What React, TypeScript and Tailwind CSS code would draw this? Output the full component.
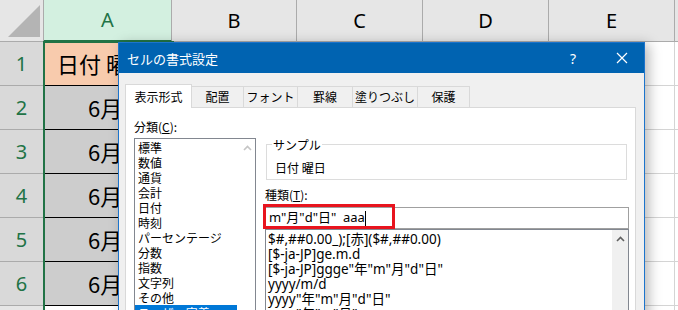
import React from "react";

const catItems = [
  "標準",
  "数値",
  "通貨",
  "会計",
  "日付",
  "時刻",
  "パーセンテージ",
  "分数",
  "指数",
  "文字列",
  "その他",
];

const fmtItems = [
  "$#,##0.00_);[赤]($#,##0.00)",
  "[$-ja-JP]ge.m.d",
  '[$-ja-JP]ggge"年"m"月"d"日"',
  "yyyy/m/d",
  'yyyy"年"m"月"d"日"',
  'yyyy"年"m"月"',
];

function ChevronUp({ color }: { color: string }) {
  return (
    <svg width="9" height="6" viewBox="0 0 9 6">
      <polyline points="1,5 4.5,1.5 8,5" fill="none" stroke={color} strokeWidth="1.6" />
    </svg>
  );
}

function Sheet() {
  const colHeaders = ["B", "C", "D", "E", ""];
  return (
    <div className="grid grid-cols-[44px_128px_125px_126px_126px_126px_126px] grid-rows-[42px_repeat(7,44px)] font-['Noto_Sans',sans-serif]">
      <div className="relative bg-[#E6E6E6] border-r border-b border-[#ABABAB]">
        <svg className="absolute left-0 top-0" width="44" height="42" viewBox="0 0 44 42">
          <polygon points="8,37 40,37 40,5" fill="#B4B4B4" />
        </svg>
      </div>
      <div className="flex items-center justify-center bg-[#D3F0E0] border-r border-[#ABABAB] border-b-2 border-b-[#217346] text-[20px] text-[#217346]">
        A
      </div>
      {colHeaders.map((c, i) => (
        <div
          key={i}
          className="flex items-center justify-center bg-[#E6E6E6] border-r border-b border-[#ABABAB] text-[20px] text-black"
        >
          {c}
        </div>
      ))}
      {[1, 2, 3, 4, 5, 6, 7].map((r) => (
        <React.Fragment key={r}>
          <div
            className={
              r <= 6
                ? "flex items-center justify-center bg-[#D9D9D9] border-r border-b border-[#ABABAB] text-[20px] text-[#217346]"
                : "flex items-center justify-center bg-[#E6E6E6] border-r border-b border-[#ABABAB] text-[20px] text-black"
            }
          >
            {r}
          </div>
          {r === 1 ? (
            <div className="flex items-center pl-[13px] bg-[#F8CBAD] border-b border-black overflow-hidden whitespace-nowrap text-[22px] text-black font-['Noto_Sans_CJK_JP',sans-serif]">
              日付 曜日
            </div>
          ) : r <= 6 ? (
            <div className="flex items-center pl-[44px] bg-[#CDCDCD] border-b border-black overflow-hidden whitespace-nowrap text-[22px] text-black font-['Noto_Sans_CJK_JP',sans-serif]">
              6月{r - 1}日 月
            </div>
          ) : (
            <div className="bg-white border-r border-b border-[#D4D4D4]" />
          )}
          {[0, 1, 2, 3, 4].map((c) => (
            <div key={c} className="bg-white border-r border-b border-[#D4D4D4]" />
          ))}
        </React.Fragment>
      ))}
    </div>
  );
}

function Dialog() {
  const tabs = ["配置", "フォント", "罫線", "塗りつぶし", "保護"];
  const tabW = ["w-[52px]", "w-[54px]", "w-[55px]", "w-[65px]", "w-[52px]"];
  return (
    <div className="absolute left-[118px] top-[42px] w-[527px] h-[280px] border border-[#1C74CC] bg-[#F0F0F0] shadow-[4px_2px_12px_rgba(0,0,0,0.28)] font-['Noto_Sans_CJK_JP',sans-serif] text-[12px] text-black">
      <div className="flex items-center h-[30px] bg-[#0063B1] text-white">
        <div className="pl-[8px] text-[13px] leading-none">セルの書式設定</div>
        <div className="ml-auto mr-[40px] text-[14px] font-['Noto_Sans',sans-serif]">?</div>
        <div className="mr-[16px]">
          <svg width="12" height="12" viewBox="0 0 12 12">
            <path d="M1 1 L11 11 M11 1 L1 11" stroke="white" strokeWidth="1.2" />
          </svg>
        </div>
      </div>
      <div className="flex items-end mt-[10px] pl-[6px] h-[24px]">
        <div className="relative z-10 flex items-center justify-center w-[67px] h-[24px] bg-white border border-b-0 border-[#D9D9D9] mb-[-1px]">
          表示形式
        </div>
        {tabs.map((t, i) => (
          <div
            key={t}
            className={`flex items-center justify-center ${tabW[i]} h-[21px] bg-[#F0F0F0] border border-l-0 border-b-0 border-[#D9D9D9]`}
          >
            {t}
          </div>
        ))}
      </div>
      <div className="ml-[6px] w-[511px] h-[220px] bg-white border border-[#D9D9D9] flex">
        <div className="ml-[8px] flex flex-col">
          <div className="mt-[11px] leading-[15px]">
            分類(<span className="underline">C</span>):
          </div>
          <div className="relative mt-[4px] w-[122px] flex-1 border border-[#828790] bg-white pt-[1px] leading-[15px]">
            <div className="absolute right-0 top-0 bottom-0 w-[16px] flex justify-center pt-[6px]">
              <ChevronUp color="#C5C5C5" />
            </div>
            {catItems.map((c) => (
              <div key={c} className="pl-[3px] h-[15px] leading-[15px]">
                {c}
              </div>
            ))}
            <div className="w-[102px] h-[15px] leading-[15px] bg-[#0078D7] text-white pl-[3px]">ユーザー定義</div>
          </div>
        </div>
        <div className="ml-[9px] w-[364px] flex flex-col">
          <div className="relative mt-[36px] ml-[1px] w-[361px] h-[36px] border border-[#DCDCDC]">
            <div className="absolute left-[5px] top-[-8px] bg-white px-[1px] leading-[15px]">サンプル</div>
            <div className="pl-[8px] pt-[15px] leading-[15px]">日付 曜日</div>
          </div>
          <div className="mt-[7px] leading-[15px]">
            種類(<span className="underline">T</span>):
          </div>
          <div className="mt-[5px] h-[22px] border border-[#A0A0A0] flex items-center pl-[3px] whitespace-pre font-['Noto_Sans','Noto_Sans_CJK_JP',sans-serif] text-[13px]">
            <span>m"月"d"日"  aaa</span>
            <span className="inline-block w-px h-[15px] bg-black" />
          </div>
          <div className="relative flex-1 border border-[#828790] pt-[2px] leading-[15px] font-['Noto_Sans','Noto_Sans_CJK_JP',sans-serif] text-[13.5px]">
            <div className="absolute right-0 top-0 bottom-0 w-[16px] bg-[#F0F0F0] flex justify-center pt-[6px]">
              <ChevronUp color="#606060" />
            </div>
            {fmtItems.map((f) => (
              <div key={f} className="pl-[2px] h-[15px] leading-[15px] whitespace-pre">
                {f}
              </div>
            ))}
          </div>
        </div>
      </div>
    </div>
  );
}

export default function App() {
  return (
    <div className="relative w-[678px] h-[310px] overflow-hidden bg-white">
      <Sheet />
      <div className="absolute left-[43px] top-[41px] w-[131px] h-[300px] border-2 border-[#217346] pointer-events-none" />
      <Dialog />
      <div className="absolute left-[263px] top-[204px] w-[132px] h-[25px] border-[3px] border-[#E8141E]" />
    </div>
  );
}
